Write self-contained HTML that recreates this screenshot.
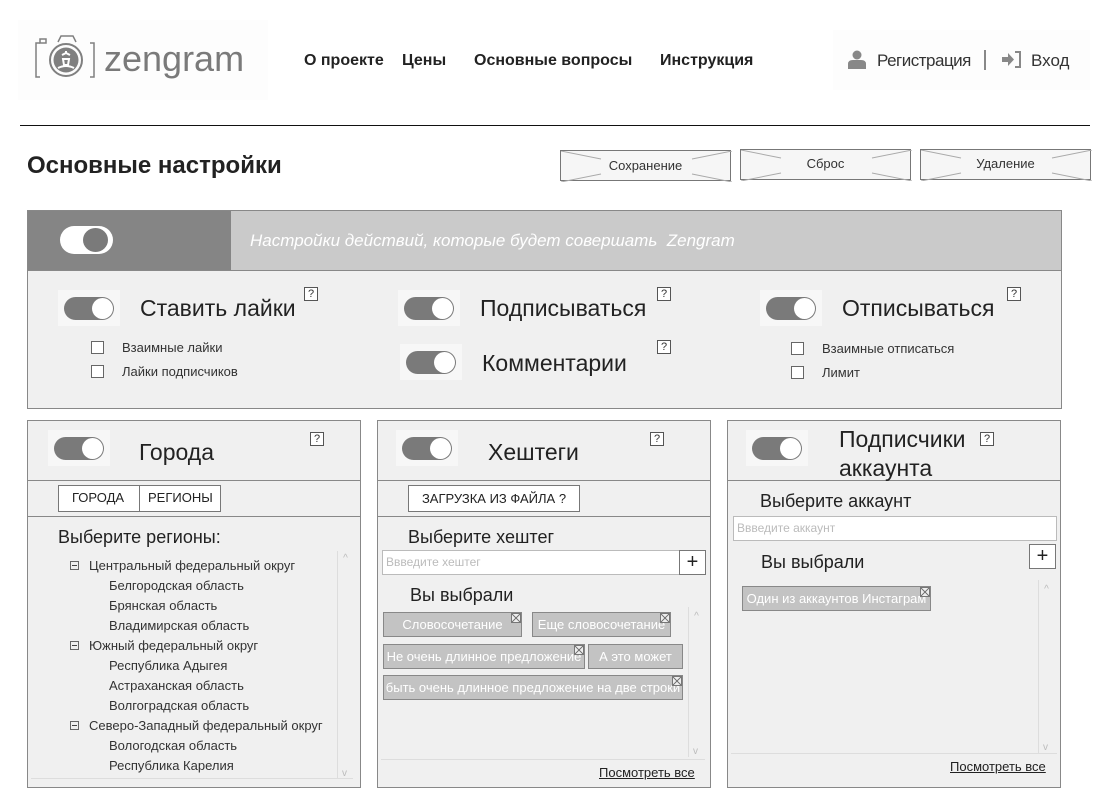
<!DOCTYPE html>
<html><head><meta charset="utf-8">
<style>
*{margin:0;padding:0;box-sizing:border-box}
body{width:1093px;height:789px;background:#fff;font-family:"Liberation Sans",Arial,sans-serif;color:#222;position:relative;overflow:hidden}
.a{position:absolute;white-space:nowrap}
.tg{position:absolute;width:62px;height:36px;background:#f7f7f7}
.tg i{position:absolute;left:6px;top:7px;width:50px;height:23px;border-radius:12px;background:#7a7a7a}
.tg b{position:absolute;left:34px;top:8px;width:21px;height:21px;border-radius:50%;background:#fff}
.q{position:absolute;width:14px;height:14px;border:1px solid #555;background:#fff;font-size:11px;line-height:12px;text-align:center;color:#333}
.cb{position:absolute;width:13px;height:13px;border:1px solid #666;background:#fff}
.pn{position:absolute;background:#f0f0f0;border:1px solid #888}
.hl{position:absolute;height:1px;background:#888}
.btn{position:absolute;height:31px;border:1px solid #777;background:#f6f6f6;font-size:13px;text-align:center;line-height:29px;color:#333}
.btn svg{position:absolute;left:0;top:0}
.t{font-size:23px;color:#222}
.tag{position:absolute;height:25px;background:#c3c3c3;border:1px solid #888;color:#fff;font-size:13px;line-height:23px;text-align:center}
.tag.x:after{content:"";position:absolute;right:0;top:0;width:8px;height:8px;border:1px solid #777;background:linear-gradient(45deg,transparent 45%,#777 45%,#777 55%,transparent 55%),linear-gradient(-45deg,#eee 45%,#777 45%,#777 55%,#eee 55%)}
.sb{position:absolute;width:16px;border-left:1px solid #ddd;background:#f0f0f0;color:#bbb;font-size:10px;text-align:center}
.inp{position:absolute;height:25px;background:#fff;border:1px solid #bbb;font-size:12px;color:#bbb;line-height:23px;padding-left:3px}
.plus{position:absolute;width:27px;height:25px;background:#fff;border:1px solid #777;font-size:20px;line-height:22px;text-align:center;color:#222}
.li{position:absolute;font-size:13px;color:#333}
.mn{position:absolute;width:9px;height:9px;border:1px solid #666;}
.mn:after{content:"";position:absolute;left:1px;top:3px;width:5px;height:1px;background:#444}
.lk{position:absolute;font-size:13px;text-decoration:underline;color:#222}
</style></head><body>

<div class="a" style="left:18px;top:20px;width:250px;height:80px;background:#fdfdfd"></div>
<svg class="a" style="left:34px;top:33px" width="62" height="48" viewBox="0 0 62 48" fill="none" stroke="#808080" stroke-width="1.5">
<path d="M6 10 H2 V44 H6"/><path d="M56 10 H60 V44 H56"/>
<rect x="6" y="6" width="6" height="4"/>
<path d="M24 9 L27 3 H39 L42 9"/>
<circle cx="32" cy="27" r="16" stroke-width="2"/>
<circle cx="32" cy="27" r="12.5" fill="#808080" stroke="none"/>
<path d="M32 18 v2 M28 22 l4 -2 4 2 M29 26 h6 l-1 6 h-4z M24 35 q8 -4 16 0" stroke="#fff" stroke-width="2"/>
</svg>
<div class="a" style="left:104px;top:38px;font-size:36px;color:#7a7a7a">zengram</div>

<div class="a" style="left:304px;top:52px;font-size:16px;font-weight:bold">О проекте</div>
<div class="a" style="left:402px;top:52px;font-size:16px;font-weight:bold">Цены</div>
<div class="a" style="left:474px;top:52px;font-size:16px;font-weight:bold">Основные вопросы</div>
<div class="a" style="left:660px;top:52px;font-size:16px;font-weight:bold">Инструкция</div>

<div class="a" style="left:833px;top:30px;width:257px;height:60px;background:#fdfdfd"></div>
<svg class="a" style="left:848px;top:50px" width="18" height="19" viewBox="0 0 18 19"><circle cx="9" cy="5" r="4.5" fill="#888"/><path d="M0 19 V14 Q0 10 5 10 H13 Q18 10 18 14 V19Z" fill="#888"/></svg>
<div class="a" style="left:877px;top:51px;font-size:17px;color:#333;letter-spacing:-0.5px">Регистрация</div>
<div class="a" style="left:984px;top:50px;width:2px;height:20px;background:#888"></div>
<svg class="a" style="left:1002px;top:51px" width="20" height="17" viewBox="0 0 20 17"><path d="M0 6 H6 V2 L12 8.5 L6 15 V11 H0Z" fill="#888"/><path d="M13 1 H18 V16 H13" stroke="#888" stroke-width="2" fill="none"/></svg>
<div class="a" style="left:1031px;top:51px;font-size:17px;color:#333">Вход</div>

<div class="a" style="left:20px;top:125px;width:1070px;height:1px;background:#111"></div>

<div class="a" style="left:27px;top:152px;font-size:24px;font-weight:bold;color:#222">Основные настройки</div>

<div class="btn" style="left:560px;top:150px;width:171px"><svg width="171" height="31"><path d="M0 0 L40 8 M171 0 L131 8 M0 31 L40 23 M171 31 L131 23" stroke="#aaa"/></svg><span style="position:relative">Сохранение</span></div>
<div class="btn" style="left:740px;top:149px;width:171px;line-height:28px"><svg width="171" height="31"><path d="M0 0 L40 8 M171 0 L131 8 M0 31 L40 23 M171 31 L131 23" stroke="#aaa"/></svg><span style="position:relative">Сброс</span></div>
<div class="btn" style="left:920px;top:149px;width:171px;line-height:28px"><svg width="171" height="31"><path d="M0 0 L40 8 M171 0 L131 8 M0 31 L40 23 M171 31 L131 23" stroke="#aaa"/></svg><span style="position:relative">Удаление</span></div>

<div class="pn" style="left:27px;top:210px;width:1035px;height:199px"></div>
<div class="a" style="left:28px;top:211px;width:203px;height:59px;background:#858585"></div>
<div class="a" style="left:231px;top:211px;width:830px;height:59px;background:#cacaca"></div>
<div class="hl" style="left:28px;top:270px;width:1033px;background:#888"></div>
<div class="a" style="left:60px;top:226px;width:53px;height:28px;border-radius:14px;background:#fff"></div>
<div class="a" style="left:83px;top:228px;width:25px;height:24px;border-radius:50%;background:#7a7a7a"></div>
<div class="a" style="left:250px;top:231px;font-size:17px;font-style:italic;color:#fff">Настройки действий, которые будет совершать&nbsp; Zengram</div>

<div class="tg" style="left:58px;top:290px"><i></i><b></b></div>
<div class="a t" style="left:140px;top:295px">Ставить лайки</div>
<div class="q" style="left:304px;top:287px">?</div>
<div class="cb" style="left:91px;top:341px"></div><div class="li" style="left:122px;top:340px">Взаимные лайки</div>
<div class="cb" style="left:91px;top:365px"></div><div class="li" style="left:122px;top:364px">Лайки подписчиков</div>

<div class="tg" style="left:398px;top:290px"><i></i><b></b></div>
<div class="a t" style="left:480px;top:295px">Подписываться</div>
<div class="q" style="left:657px;top:287px">?</div>
<div class="tg" style="left:400px;top:344px"><i></i><b></b></div>
<div class="a t" style="left:482px;top:350px">Комментарии</div>
<div class="q" style="left:657px;top:340px">?</div>

<div class="tg" style="left:760px;top:290px"><i></i><b></b></div>
<div class="a t" style="left:842px;top:295px">Отписываться</div>
<div class="q" style="left:1007px;top:287px">?</div>
<div class="cb" style="left:791px;top:342px"></div><div class="li" style="left:822px;top:341px">Взаимные отписаться</div>
<div class="cb" style="left:791px;top:366px"></div><div class="li" style="left:822px;top:365px">Лимит</div>

<div class="pn" style="left:27px;top:420px;width:334px;height:368px"></div>
<div class="hl" style="left:28px;top:480px;width:332px"></div>
<div class="hl" style="left:28px;top:516px;width:332px"></div>
<div class="tg" style="left:48px;top:430px"><i></i><b></b></div>
<div class="a t" style="left:139px;top:439px">Города</div>
<div class="q" style="left:310px;top:432px">?</div>
<div class="a" style="left:58px;top:485px;width:163px;height:27px;background:#fff;border:1px solid #777"></div>
<div class="a" style="left:139px;top:485px;width:1px;height:27px;background:#777"></div>
<div class="li" style="left:72px;top:490px;color:#222">ГОРОДА</div>
<div class="li" style="left:148px;top:490px;color:#222">РЕГИОНЫ</div>
<div class="a" style="left:58px;top:527px;font-size:18px">Выберите регионы:</div>
<div class="sb" style="left:337px;top:551px;height:228px;padding-top:2px">^<span style="position:absolute;left:4px;bottom:0">v</span></div>
<div class="hl" style="left:31px;top:778px;width:322px;background:#ddd"></div>
<div class="mn" style="left:70px;top:561px"></div><div class="li" style="left:89px;top:558px">Центральный федеральный округ</div>
<div class="li" style="left:109px;top:578px">Белгородская область</div>
<div class="li" style="left:109px;top:598px">Брянская область</div>
<div class="li" style="left:109px;top:618px">Владимирская область</div>
<div class="mn" style="left:70px;top:641px"></div><div class="li" style="left:89px;top:638px">Южный федеральный округ</div>
<div class="li" style="left:109px;top:658px">Республика Адыгея</div>
<div class="li" style="left:109px;top:678px">Астраханская область</div>
<div class="li" style="left:109px;top:698px">Волгоградская область</div>
<div class="mn" style="left:70px;top:721px"></div><div class="li" style="left:89px;top:718px">Северо-Западный федеральный округ</div>
<div class="li" style="left:109px;top:738px">Вологодская область</div>
<div class="li" style="left:109px;top:758px">Республика Карелия</div>

<div class="pn" style="left:377px;top:420px;width:334px;height:368px"></div>
<div class="hl" style="left:378px;top:480px;width:332px"></div>
<div class="hl" style="left:378px;top:516px;width:332px"></div>
<div class="tg" style="left:396px;top:430px"><i></i><b></b></div>
<div class="a t" style="left:488px;top:439px">Хештеги</div>
<div class="q" style="left:650px;top:432px">?</div>
<div class="a" style="left:408px;top:485px;width:172px;height:27px;background:#fff;border:1px solid #777;font-size:13px;text-align:center;line-height:25px">ЗАГРУЗКА ИЗ ФАЙЛА ?</div>
<div class="a" style="left:408px;top:527px;font-size:18px">Выберите хештег</div>
<div class="inp" style="left:382px;top:550px;width:298px">Ввведите хештег</div>
<div class="plus" style="left:679px;top:550px">+</div>
<div class="a" style="left:410px;top:585px;font-size:18px">Вы выбрали</div>
<div class="sb" style="left:688px;top:607px;height:150px;padding-top:4px">^<span style="position:absolute;left:4px;bottom:0">v</span></div>
<div class="hl" style="left:381px;top:759px;width:324px;background:#ddd"></div>
<div class="tag x" style="left:383px;top:612px;width:139px">Словосочетание</div>
<div class="tag x" style="left:532px;top:612px;width:139px">Еще словосочетание</div>
<div class="tag x" style="left:383px;top:644px;width:202px">Не очень длинное предложение</div>
<div class="tag" style="left:588px;top:644px;width:95px">А это может</div>
<div class="tag x" style="left:383px;top:675px;width:300px">быть очень длинное предложение на две строки</div>
<div class="lk" style="left:599px;top:765px">Посмотреть все</div>

<div class="pn" style="left:727px;top:420px;width:334px;height:368px"></div>
<div class="hl" style="left:728px;top:480px;width:332px"></div>
<div class="tg" style="left:746px;top:430px"><i></i><b></b></div>
<div class="a t" style="left:839px;top:425px;line-height:29px">Подписчики<br>аккаунта</div>
<div class="q" style="left:980px;top:432px">?</div>
<div class="a" style="left:760px;top:491px;font-size:18px">Выберите аккаунт</div>
<div class="inp" style="left:733px;top:516px;width:324px">Ввведите аккаунт</div>
<div class="plus" style="left:1029px;top:544px">+</div>
<div class="a" style="left:761px;top:552px;font-size:18px">Вы выбрали</div>
<div class="sb" style="left:1038px;top:580px;height:173px;padding-top:4px">^<span style="position:absolute;left:4px;bottom:0">v</span></div>
<div class="hl" style="left:731px;top:753px;width:326px;background:#ddd"></div>
<div class="tag x" style="left:742px;top:586px;width:189px">Один из аккаунтов Инстаграм</div>
<div class="lk" style="left:950px;top:759px">Посмотреть все</div>

</body></html>
